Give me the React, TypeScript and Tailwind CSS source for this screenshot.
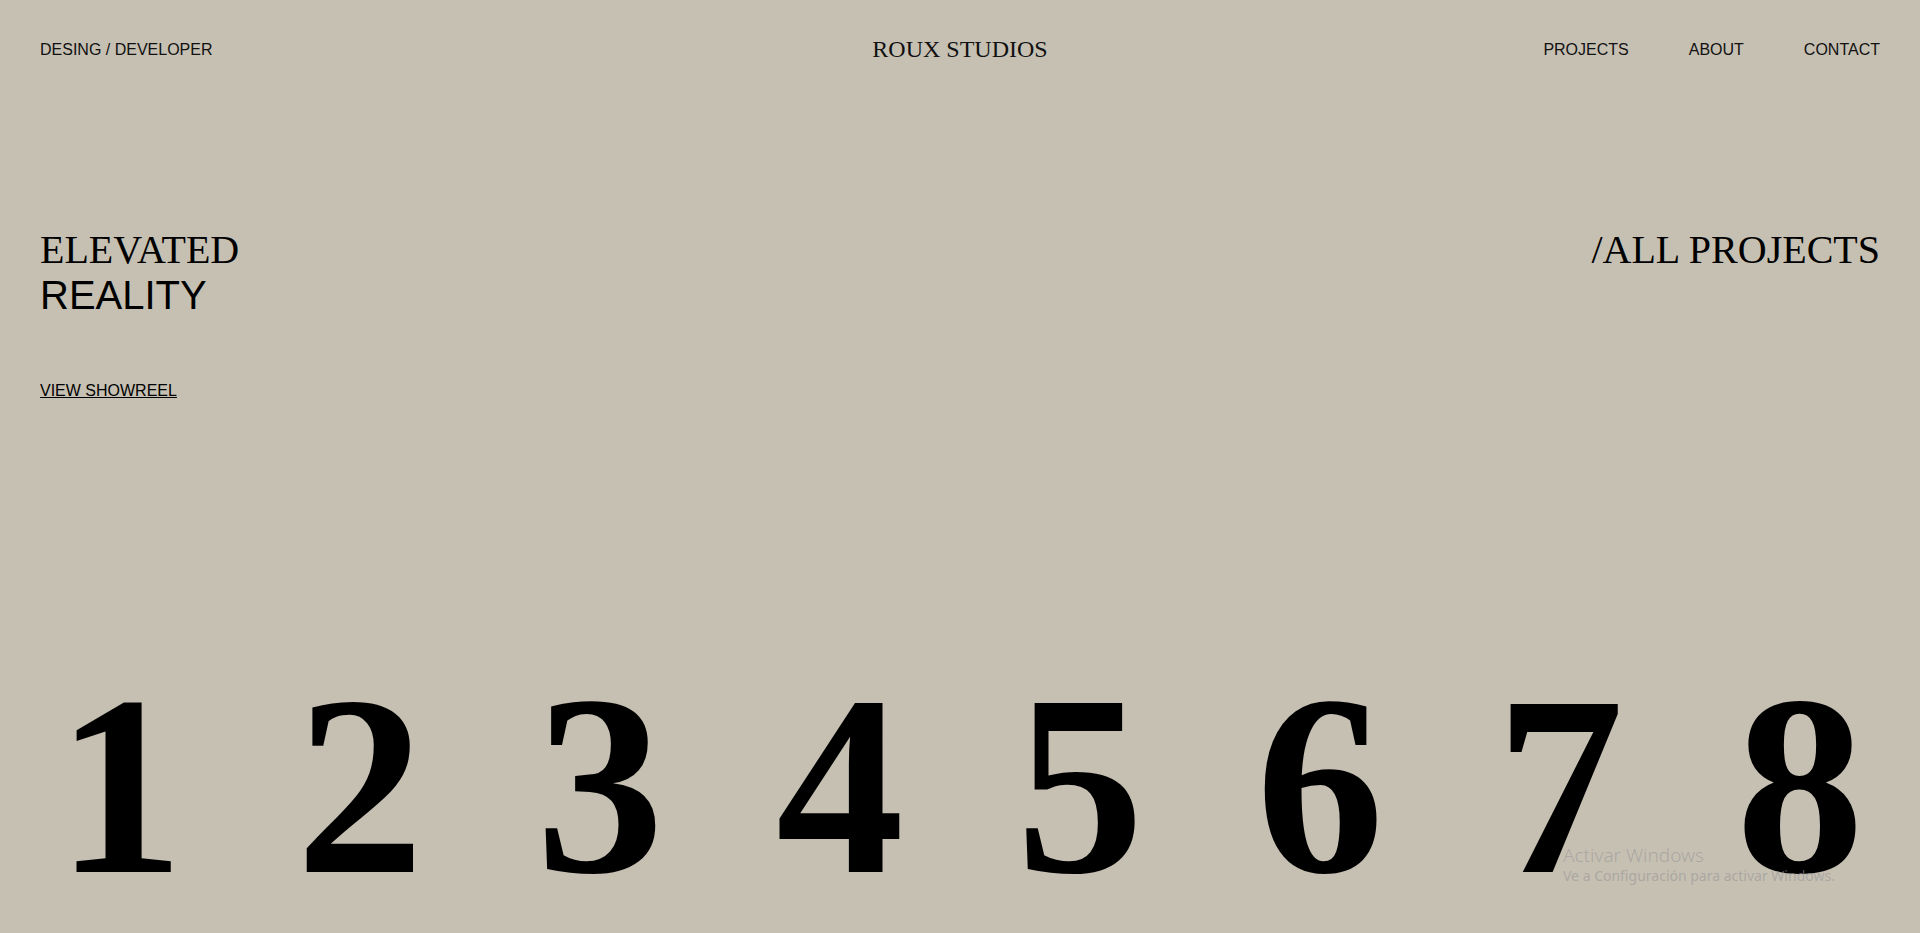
const sans = "font-['Liberation_Sans',Arial,sans-serif]";
const serif = "font-['Liberation_Serif','Times_New_Roman',serif]";

const navLinks = ["PROJECTS", "ABOUT", "CONTACT"];
const numbers = ["1", "2", "3", "4", "5", "6", "7", "8"];

function Header() {
  return (
    <header className="grid grid-cols-3 items-center px-10 pt-[36px]">
      <span className={`${sans} text-[16px] text-[#111]`}>DESING / DEVELOPER</span>
      <a href="#" className={`${serif} text-[24px] text-[#111] text-center`}>
        ROUX STUDIOS
      </a>
      <nav className="flex justify-end gap-15">
        {navLinks.map((link) => (
          <a key={link} href="#" className={`${sans} text-[16px] text-[#111]`}>
            {link}
          </a>
        ))}
      </nav>
    </header>
  );
}

function Hero() {
  return (
    <section className="flex justify-between items-start px-10 mt-[163px]">
      <div className="flex flex-col items-start">
        <h1 className="text-[40px] text-black">
          <span className={`${serif} block`}>ELEVATED</span>
          <span className={`${sans} block`}>REALITY</span>
        </h1>
        <a href="#" className={`${sans} text-[16px] text-black underline mt-16`}>
          VIEW SHOWREEL
        </a>
      </div>
      <a href="#" className={`${serif} text-[40px] text-black`}>
        /ALL PROJECTS
      </a>
    </section>
  );
}

function Numbers() {
  return (
    <div className={`${serif} grid grid-cols-8 mt-auto text-center text-[256px] font-bold text-black`}>
      {numbers.map((n) => (
        <span key={n}>{n}</span>
      ))}
    </div>
  );
}

export default function App() {
  return (
    <div className="relative h-screen flex flex-col overflow-hidden bg-[#c6c0b3] leading-[normal]">
      <Header />
      <Hero />
      <Numbers />
      {/* os activation watermark */}
      <div className="absolute left-[1563px] top-[843px] pointer-events-none font-['Noto_Sans',sans-serif] text-[rgba(150,150,150,0.6)]">
        <p className="text-[19px] font-light leading-[24px]">Activar Windows</p>
        <p className="text-[14px] leading-[17px]">Ve a Configuración para activar Windows.</p>
      </div>
    </div>
  );
}
